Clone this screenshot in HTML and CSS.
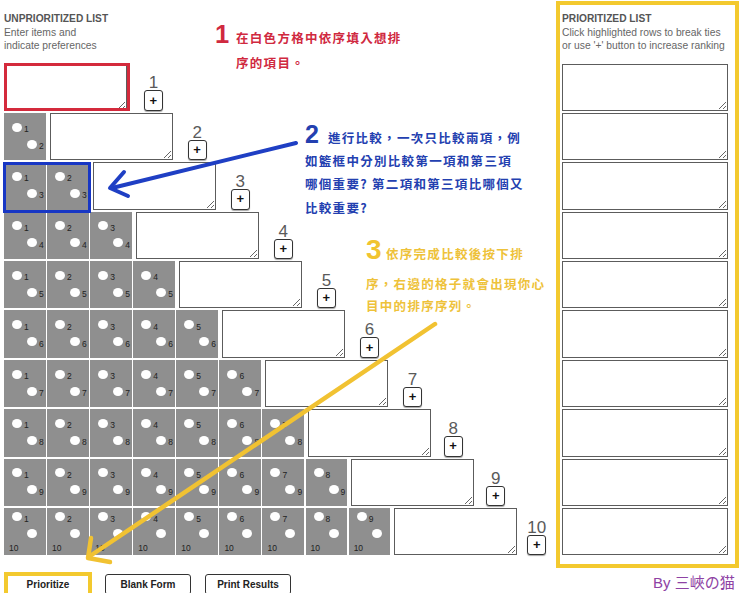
FILE: index.html
```html
<!DOCTYPE html>
<html lang="zh-Hant">
<head>
<meta charset="utf-8">
<title>Prioritizer</title>
<link rel="stylesheet" href="styles.css">
</head>
<body>
<div class="page">
  <div class="left">
    <div class="head">
      <div class="title">UNPRIORITIZED LIST</div>
      <div class="sub">Enter items and<br>indicate preferences</div>
    </div>
    <div class="rows">
      <div class="row r1">
        <textarea></textarea>
        <div class="num"><span>1</span><button>+</button></div>
      </div>
      <div class="row r2">
        <div class="cell"><div class="ln"><span class="dot"></span><span class="n">1</span></div><div class="ln l2"><span class="dot"></span><span class="n">2</span></div></div>
        <textarea></textarea>
        <div class="num"><span>2</span><button>+</button></div>
      </div>
      <div class="row r3">
        <div class="cell"><div class="ln"><span class="dot"></span><span class="n">1</span></div><div class="ln l2"><span class="dot"></span><span class="n">3</span></div></div>
        <div class="cell"><div class="ln"><span class="dot"></span><span class="n">2</span></div><div class="ln l2"><span class="dot"></span><span class="n">3</span></div></div>
        <textarea></textarea>
        <div class="num"><span>3</span><button>+</button></div>
      </div>
      <div class="row r4">
        <div class="cell"><div class="ln"><span class="dot"></span><span class="n">1</span></div><div class="ln l2"><span class="dot"></span><span class="n">4</span></div></div>
        <div class="cell"><div class="ln"><span class="dot"></span><span class="n">2</span></div><div class="ln l2"><span class="dot"></span><span class="n">4</span></div></div>
        <div class="cell"><div class="ln"><span class="dot"></span><span class="n">3</span></div><div class="ln l2"><span class="dot"></span><span class="n">4</span></div></div>
        <textarea></textarea>
        <div class="num"><span>4</span><button>+</button></div>
      </div>
      <div class="row r5">
        <div class="cell"><div class="ln"><span class="dot"></span><span class="n">1</span></div><div class="ln l2"><span class="dot"></span><span class="n">5</span></div></div>
        <div class="cell"><div class="ln"><span class="dot"></span><span class="n">2</span></div><div class="ln l2"><span class="dot"></span><span class="n">5</span></div></div>
        <div class="cell"><div class="ln"><span class="dot"></span><span class="n">3</span></div><div class="ln l2"><span class="dot"></span><span class="n">5</span></div></div>
        <div class="cell"><div class="ln"><span class="dot"></span><span class="n">4</span></div><div class="ln l2"><span class="dot"></span><span class="n">5</span></div></div>
        <textarea></textarea>
        <div class="num"><span>5</span><button>+</button></div>
      </div>
      <div class="row r6">
        <div class="cell"><div class="ln"><span class="dot"></span><span class="n">1</span></div><div class="ln l2"><span class="dot"></span><span class="n">6</span></div></div>
        <div class="cell"><div class="ln"><span class="dot"></span><span class="n">2</span></div><div class="ln l2"><span class="dot"></span><span class="n">6</span></div></div>
        <div class="cell"><div class="ln"><span class="dot"></span><span class="n">3</span></div><div class="ln l2"><span class="dot"></span><span class="n">6</span></div></div>
        <div class="cell"><div class="ln"><span class="dot"></span><span class="n">4</span></div><div class="ln l2"><span class="dot"></span><span class="n">6</span></div></div>
        <div class="cell"><div class="ln"><span class="dot"></span><span class="n">5</span></div><div class="ln l2"><span class="dot"></span><span class="n">6</span></div></div>
        <textarea></textarea>
        <div class="num"><span>6</span><button>+</button></div>
      </div>
      <div class="row r7">
        <div class="cell"><div class="ln"><span class="dot"></span><span class="n">1</span></div><div class="ln l2"><span class="dot"></span><span class="n">7</span></div></div>
        <div class="cell"><div class="ln"><span class="dot"></span><span class="n">2</span></div><div class="ln l2"><span class="dot"></span><span class="n">7</span></div></div>
        <div class="cell"><div class="ln"><span class="dot"></span><span class="n">3</span></div><div class="ln l2"><span class="dot"></span><span class="n">7</span></div></div>
        <div class="cell"><div class="ln"><span class="dot"></span><span class="n">4</span></div><div class="ln l2"><span class="dot"></span><span class="n">7</span></div></div>
        <div class="cell"><div class="ln"><span class="dot"></span><span class="n">5</span></div><div class="ln l2"><span class="dot"></span><span class="n">7</span></div></div>
        <div class="cell"><div class="ln"><span class="dot"></span><span class="n">6</span></div><div class="ln l2"><span class="dot"></span><span class="n">7</span></div></div>
        <textarea></textarea>
        <div class="num"><span>7</span><button>+</button></div>
      </div>
      <div class="row r8">
        <div class="cell"><div class="ln"><span class="dot"></span><span class="n">1</span></div><div class="ln l2"><span class="dot"></span><span class="n">8</span></div></div>
        <div class="cell"><div class="ln"><span class="dot"></span><span class="n">2</span></div><div class="ln l2"><span class="dot"></span><span class="n">8</span></div></div>
        <div class="cell"><div class="ln"><span class="dot"></span><span class="n">3</span></div><div class="ln l2"><span class="dot"></span><span class="n">8</span></div></div>
        <div class="cell"><div class="ln"><span class="dot"></span><span class="n">4</span></div><div class="ln l2"><span class="dot"></span><span class="n">8</span></div></div>
        <div class="cell"><div class="ln"><span class="dot"></span><span class="n">5</span></div><div class="ln l2"><span class="dot"></span><span class="n">8</span></div></div>
        <div class="cell"><div class="ln"><span class="dot"></span><span class="n">6</span></div><div class="ln l2"><span class="dot"></span><span class="n">8</span></div></div>
        <div class="cell"><div class="ln"><span class="dot"></span><span class="n">7</span></div><div class="ln l2"><span class="dot"></span><span class="n">8</span></div></div>
        <textarea></textarea>
        <div class="num"><span>8</span><button>+</button></div>
      </div>
      <div class="row r9">
        <div class="cell"><div class="ln"><span class="dot"></span><span class="n">1</span></div><div class="ln l2"><span class="dot"></span><span class="n">9</span></div></div>
        <div class="cell"><div class="ln"><span class="dot"></span><span class="n">2</span></div><div class="ln l2"><span class="dot"></span><span class="n">9</span></div></div>
        <div class="cell"><div class="ln"><span class="dot"></span><span class="n">3</span></div><div class="ln l2"><span class="dot"></span><span class="n">9</span></div></div>
        <div class="cell"><div class="ln"><span class="dot"></span><span class="n">4</span></div><div class="ln l2"><span class="dot"></span><span class="n">9</span></div></div>
        <div class="cell"><div class="ln"><span class="dot"></span><span class="n">5</span></div><div class="ln l2"><span class="dot"></span><span class="n">9</span></div></div>
        <div class="cell"><div class="ln"><span class="dot"></span><span class="n">6</span></div><div class="ln l2"><span class="dot"></span><span class="n">9</span></div></div>
        <div class="cell"><div class="ln"><span class="dot"></span><span class="n">7</span></div><div class="ln l2"><span class="dot"></span><span class="n">9</span></div></div>
        <div class="cell"><div class="ln"><span class="dot"></span><span class="n">8</span></div><div class="ln l2"><span class="dot"></span><span class="n">9</span></div></div>
        <textarea></textarea>
        <div class="num"><span>9</span><button>+</button></div>
      </div>
      <div class="row r10">
        <div class="cell"><div class="ln"><span class="dot"></span><span class="n">1</span></div><div class="ln l2"><span class="dot"></span></div><div class="ln l3"><span class="n">10</span></div></div>
        <div class="cell"><div class="ln"><span class="dot"></span><span class="n">2</span></div><div class="ln l2"><span class="dot"></span></div><div class="ln l3"><span class="n">10</span></div></div>
        <div class="cell"><div class="ln"><span class="dot"></span><span class="n">3</span></div><div class="ln l2"><span class="dot"></span></div><div class="ln l3"><span class="n">10</span></div></div>
        <div class="cell"><div class="ln"><span class="dot"></span><span class="n">4</span></div><div class="ln l2"><span class="dot"></span></div><div class="ln l3"><span class="n">10</span></div></div>
        <div class="cell"><div class="ln"><span class="dot"></span><span class="n">5</span></div><div class="ln l2"><span class="dot"></span></div><div class="ln l3"><span class="n">10</span></div></div>
        <div class="cell"><div class="ln"><span class="dot"></span><span class="n">6</span></div><div class="ln l2"><span class="dot"></span></div><div class="ln l3"><span class="n">10</span></div></div>
        <div class="cell"><div class="ln"><span class="dot"></span><span class="n">7</span></div><div class="ln l2"><span class="dot"></span></div><div class="ln l3"><span class="n">10</span></div></div>
        <div class="cell"><div class="ln"><span class="dot"></span><span class="n">8</span></div><div class="ln l2"><span class="dot"></span></div><div class="ln l3"><span class="n">10</span></div></div>
        <div class="cell"><div class="ln"><span class="dot"></span><span class="n">9</span></div><div class="ln l2"><span class="dot"></span></div><div class="ln l3"><span class="n">10</span></div></div>
        <textarea></textarea>
        <div class="num"><span>10</span><button>+</button></div>
      </div>
    </div>
    <div class="actions">
      <button>Prioritize</button>
      <button>Blank Form</button>
      <button>Print Results</button>
    </div>
  </div>
  <div class="right">
    <div class="title">PRIORITIZED LIST</div>
    <div class="sub">Click highlighted rows to break ties<br>or use '+' button to increase ranking</div>
    <div class="plist">
      <textarea></textarea><textarea></textarea><textarea></textarea><textarea></textarea><textarea></textarea>
      <textarea></textarea><textarea></textarea><textarea></textarea><textarea></textarea><textarea></textarea>
    </div>
  </div>
</div>

<div class="mark mark-red"></div>
<div class="mark mark-blue"></div>
<div class="mark mark-yellow"></div>

<svg class="arrows" width="740" height="593" viewBox="0 0 740 593">
  <g fill="none" stroke="#1f3fc4" stroke-width="4" stroke-linecap="round" stroke-linejoin="round">
    <line x1="296" y1="143" x2="112" y2="188"/>
    <polyline points="124,172 110,188 128,196"/>
  </g>
  <g fill="none" stroke="#f1c232" stroke-width="4.5" stroke-linecap="round" stroke-linejoin="round">
    <line x1="435" y1="324" x2="90" y2="556"/>
    <polyline points="91,538 88,558 110,562"/>
  </g>
</svg>

<div class="note note1">
  <span class="big">1</span>
  <div class="txt">
    <div>在白色方格中依序填入想排</div>
    <div>序的項目。</div>
  </div>
</div>

<div class="note note2">
  <div><span class="big">2</span>進行比較，一次只比較兩項，例</div>
  <div>如籃框中分別比較第一項和第三項</div>
  <div>哪個重要? 第二項和第三項比哪個又</div>
  <div>比較重要?</div>
</div>

<div class="note note3">
  <div><span class="big">3</span>依序完成比較後按下排</div>
  <div class="second">序，右邊的格子就會出現你心</div>
  <div>目中的排序序列。</div>
</div>

<div class="sign">By 三峽の猫</div>
</body>
</html>
```

FILE: styles.css
```css
* { box-sizing: border-box; }

html, body {
  margin: 0;
  padding: 0;
  background: #fff;
}

body {
  position: relative;
  width: 740px;
  height: 593px;
  overflow: hidden;
  font-family: "Liberation Sans", Arial, sans-serif;
  color: #555;
}

.page {
  display: flex;
  align-items: flex-start;
  padding-left: 4px;
}

.left {
  flex: none;
  width: 552px;
}

.head {
  padding-top: 12px;
}

.title {
  font-size: 10.2px;
  font-weight: bold;
  line-height: 14px;
  color: #555;
}

.sub {
  font-size: 10.3px;
  line-height: 13px;
  color: #666;
}

.rows {
  margin-top: 11.5px;
  display: flex;
  flex-direction: column;
  gap: 2px;
}

.row {
  display: flex;
  height: 47.4px;
  gap: 1.4px;
}

.cell {
  flex: none;
  width: 41.7px;
  height: 100%;
  background: #8f8f8f;
  display: flex;
  flex-direction: column;
  justify-content: center;
}

.ln {
  display: flex;
  align-items: center;
  height: 17px;
  padding-left: 8px;
}

.ln.l2 { padding-left: 23px; }
.ln.l3 { padding-left: 5px; height: 11px; }

.dot {
  flex: none;
  width: 10px;
  height: 9px;
  border-radius: 50%;
  background: #fff;
  margin-bottom: 2px;
}

.n {
  font-size: 8.5px;
  line-height: 9px;
  color: #222;
  margin-left: 2px;
  margin-top: 3px;
}

.ln.l3 .n { margin-left: 0; margin-top: 0; }

textarea {
  display: block;
  flex: none;
  margin: 0;
  padding: 2px;
  background: #fff;
  border: 1px solid #5c5c5c;
  border-radius: 0;
  font-family: "Liberation Sans", Arial, sans-serif;
  font-size: 12px;
}

.row textarea {
  width: 123px;
  height: 100%;
  margin-left: 2.6px;
}

.row.r1 textarea { margin-left: 0; }

.num {
  flex: none;
  width: 19px;
  margin-left: 13.6px;
  display: flex;
  flex-direction: column;
  align-items: center;
  justify-content: flex-end;
}

.row.r1 .num { margin-left: 15.5px; }
.row.r8 .num { margin-left: 11.1px; }
.row.r9 .num { margin-left: 10.6px; }
.row.r10 .num { margin-left: 8.6px; }

.num span {
  font-size: 17px;
  line-height: 15px;
  color: #5a5a5a;
  white-space: nowrap;
}

.num button {
  width: 19px;
  height: 20.5px;
  margin: 0;
  padding: 0;
  background: #fff;
  border: 1px solid #333;
  border-radius: 3px;
  box-shadow: 0 1px 1px rgba(0, 0, 0, 0.35);
  font-family: "Liberation Sans", Arial, sans-serif;
  font-size: 13px;
  font-weight: bold;
  line-height: 18px;
  color: #111;
}

.actions {
  margin-top: 18.5px;
  padding-left: 1px;
  display: flex;
  gap: 14px;
}

.actions button {
  width: 86px;
  height: 21px;
  margin: 0;
  padding: 0;
  background: #fff;
  border: 1px solid #333;
  border-radius: 3px;
  font-family: "Liberation Sans", Arial, sans-serif;
  font-size: 10px;
  font-weight: bold;
  color: #222;
}

.right {
  flex: none;
  width: 183px;
  height: 567px;
  margin-top: 1px;
  border: 4px solid #f3c92e;
  padding: 7px 0 0 2px;
}

.plist {
  margin-top: 11.5px;
  display: flex;
  flex-direction: column;
  gap: 2px;
}

.plist textarea {
  width: 166px;
  height: 47.4px;
}

/* annotation overlays */
.mark {
  position: absolute;
  pointer-events: none;
}

.mark-red {
  left: 4px;
  top: 62.5px;
  width: 125.5px;
  height: 48.5px;
  border: 3px solid #d42a3c;
}

.mark-blue {
  left: 2.5px;
  top: 161.5px;
  width: 88px;
  height: 51px;
  border: 3.3px solid #1736c4;
}

.mark-yellow {
  left: 4px;
  top: 572px;
  width: 88px;
  height: 30px;
  border: 4px solid #f3c92e;
}

.arrows {
  position: absolute;
  left: 0;
  top: 0;
  pointer-events: none;
}

.note {
  position: absolute;
  font-family: "Noto Sans CJK TC", "Noto Sans CJK SC", sans-serif;
  font-size: 12.5px;
  font-weight: 700;
  letter-spacing: 1.3px;
  white-space: nowrap;
}

.note .big {
  font-family: "Liberation Sans", Arial, sans-serif;
  font-weight: bold;
  letter-spacing: 0;
  line-height: 1px;
}

.note1 {
  left: 215px;
  top: 26px;
  display: flex;
  align-items: baseline;
  color: #d0293f;
  line-height: 24.5px;
}

.note1 .big {
  font-size: 25.5px;
  margin-right: 6.8px;
}

.note2 {
  left: 305px;
  top: 125.6px;
  color: #2340b0;
  line-height: 23.4px;
}

.note2 .big {
  font-size: 25px;
  margin-right: 9px;
}

.note3 {
  left: 366px;
  top: 242.5px;
  color: #eec23a;
  line-height: 22.5px;
}

.note3 .big {
  font-size: 28px;
  margin-right: 4.4px;
  color: #f1c430;
}

.note3 .second {
  margin-top: 7.7px;
}

.sign {
  position: absolute;
  left: 653px;
  top: 574.5px;
  font-family: "Liberation Sans", "Noto Sans CJK TC", sans-serif;
  font-size: 15px;
  line-height: 15px;
  color: #8e42a4;
  white-space: nowrap;
}
```
